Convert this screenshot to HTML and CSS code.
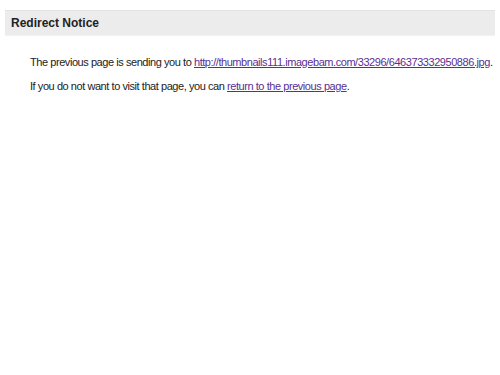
FILE: index.html
```html
<!DOCTYPE html>
<html lang="en">
<head>
  <meta charset="UTF-8" />
  <title>Redirect Notice</title>
  <link rel="stylesheet" href="styles.css">
</head>
<body>
  <div class="notice-bar">
    <span class="notice-title">Redirect Notice</span>
  </div>

  <div class="notice-body">
    <p>The previous page is sending you to <a href="#">http://thumbnails111.imagebam.com/33296/646373332950886.jpg</a>.</p>
    <p>If you do not want to visit that page, you can <a href="#">return to the previous page</a>.</p>
  </div>
</body>
</html>
```

FILE: styles.css
```css
body {
  margin: 5px;
  padding: 0;
  background: #fff;
  color: #222;
  font-family: 'Liberation Sans', Arial, sans-serif;
  font-size: 11px;
}

.notice-bar {
  margin-top: 5px;
  background: #ececed;
  border-top: 1px solid #e3e3e3;
  border-bottom: 1px solid #f2f2f2;
  padding: 5px 6px;
  height: 14px;
  line-height: 14px;
}

.notice-title {
  font-size: 12px;
  font-weight: bold;
  color: #222;
}

.notice-body {
  margin: 19px 0 0 25px;
  letter-spacing: -0.44px;
}

.notice-body p {
  margin: 0 0 9px;
  line-height: 15px;
  white-space: nowrap;
}

a {
  color: #5a2f92;
}
```
